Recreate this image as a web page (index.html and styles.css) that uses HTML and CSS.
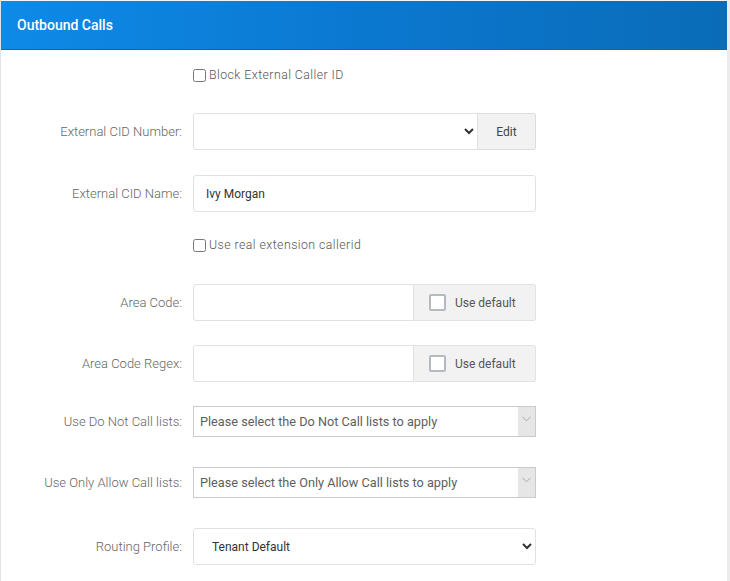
FILE: index.html
```html
<!DOCTYPE HTML>
<html>
<head>
<meta charset="utf-8">
<link rel="stylesheet" href="styles.css">
</head>
<body>
  <div class="panel">
    <div class="panel-heading">Outbound Calls</div>
    <div class="panel-body">
      <div class="row row-check row-first">
        <div class="label"></div>
        <label class="check"><input type="checkbox"> Block External Caller ID</label>
      </div>
      <div class="row row-wide">
        <div class="label">External CID Number:</div>
        <div class="group">
          <select class="control"><option></option></select>
          <button class="btn">Edit</button>
        </div>
      </div>
      <div class="row row-wide">
        <div class="label">External CID Name:</div>
        <input class="control text" type="text" value="Ivy Morgan">
      </div>
      <div class="row row-check row-second">
        <div class="label"></div>
        <label class="check"><input type="checkbox"> Use real extension callerid</label>
      </div>
      <div class="row">
        <div class="label">Area Code:</div>
        <div class="group">
          <input class="control text" type="text">
          <span class="addon"><span class="box"></span>Use default</span>
        </div>
      </div>
      <div class="row">
        <div class="label">Area Code Regex:</div>
        <div class="group">
          <input class="control text" type="text">
          <span class="addon"><span class="box"></span>Use default</span>
        </div>
      </div>
      <div class="row row-multi">
        <div class="label">Use Do Not Call lists:</div>
        <div class="multi">
          <span class="multi-text">Please select the Do Not Call lists to apply</span>
          <span class="multi-arrow"><svg width="9" height="6" viewBox="0 0 9 6"><path d="M0.5 0.8 L4.5 4.8 L8.5 0.8" fill="none" stroke="#a0a0a0" stroke-width="0.9"/></svg></span>
        </div>
      </div>
      <div class="row row-multi">
        <div class="label">Use Only Allow Call lists:</div>
        <div class="multi">
          <span class="multi-text">Please select the Only Allow Call lists to apply</span>
          <span class="multi-arrow"><svg width="9" height="6" viewBox="0 0 9 6"><path d="M0.5 0.8 L4.5 4.8 L8.5 0.8" fill="none" stroke="#a0a0a0" stroke-width="0.9"/></svg></span>
        </div>
      </div>
      <div class="row">
        <div class="label">Routing Profile:</div>
        <select class="control routing"><option>Tenant Default</option></select>
      </div>
    </div>
  </div>
</body>
</html>
```
FILE: styles.css
```css
*{
    padding: 0px;
    margin: 0px;
    box-sizing: border-box;
}
body{
    font-family: Roboto, "Liberation Sans", sans-serif;
    font-size: 12px;
    color: #666;
    background: #fff;
}
.panel{
    width: 730px;
    height: 581px;
    border-top: 1px solid #f4f4f4;
    border-left: 1px solid #e4e4e4;
    border-right: 3px solid #ececec;
    overflow: hidden;
}
.panel-heading{
    height: 49px;
    padding-left: 16px;
    line-height: 48px;
    font-size: 14px;
    font-weight: 500;
    color: #fff;
    background: linear-gradient(90deg, #0e8ae7 0%, #0b78d0 50%, #0a6cb8 100%);
    border-bottom: 1px solid #0a68ae;
}
.panel-body{
    padding-top: 17px;
}
.row{
    display: flex;
    align-items: center;
    margin-bottom: 24px;
}
.label{
    width: 181px;
    flex: none;
    text-align: right;
    margin-right: 11px;
    font-size: 13px;
    font-weight: 300;
    color: #666;
}
.row-first{
    margin-bottom: 30px;
}
.row-wide{
    margin-bottom: 25px;
}
.row-second{
    margin-bottom: 31px;
}
.row-multi{
    margin-bottom: 30px;
}
.check{
    display: flex;
    align-items: center;
    height: 16px;
    font-size: 12.3px;
    font-weight: 300;
    color: #555;
    letter-spacing: 0.45px;
}
.check input{
    width: 13px;
    height: 13px;
    margin: 0 3px 0 0;
}
.group{
    display: flex;
    width: 343px;
    height: 37px;
}
.control{
    width: 343px;
    height: 37px;
    border: 1px solid #e1e1e1;
    border-radius: 3px;
    background: #fff;
    font-family: Roboto, "Liberation Sans", sans-serif;
    font-size: 12px;
    color: #333;
    outline: none;
}
.text{
    padding: 0 12px;
}
.group .control{
    flex: 1;
    width: auto;
    border-radius: 3px 0 0 3px;
}
.group select.control{
    padding-left: 8px;
}
.btn{
    width: 58px;
    height: 37px;
    border: 1px solid #dcdcdc;
    border-left: none;
    border-radius: 0 3px 3px 0;
    background: #f2f2f2;
    font-family: Roboto, "Liberation Sans", sans-serif;
    font-size: 12px;
    color: #444;
}
.addon{
    display: flex;
    align-items: center;
    width: 122px;
    flex: none;
    padding-left: 15px;
    border: 1px solid #e2e2e2;
    border-left: none;
    border-radius: 0 3px 3px 0;
    background: #f2f2f2;
    color: #555;
}
.box{
    width: 17px;
    height: 17px;
    margin-right: 9px;
    border: 2px solid #b3bac1;
    border-radius: 2px;
    background: #fff;
}
.multi{
    display: flex;
    width: 343px;
    height: 31px;
    border: 1px solid #cbcbcb;
    background: #fff;
}
.multi-text{
    flex: 1;
    line-height: 29px;
    padding-left: 6px;
    font-size: 12.7px;
    color: #5e5e5e;
}
.multi-arrow{
    width: 17px;
    display: flex;
    justify-content: center;
    padding-top: 9px;
    background: #e6e6e6;
}
.routing{
    padding-left: 14px;
    font-size: 12px;
}
```
